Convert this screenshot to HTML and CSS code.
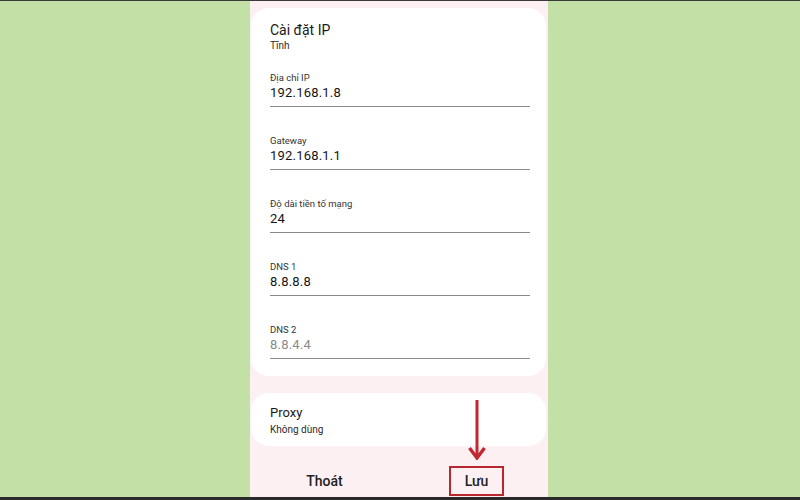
FILE: index.html
```html
<!DOCTYPE html>
<html lang="vi">
<head>
<meta charset="utf-8">
<link rel="stylesheet" href="styles.css">
</head>
<body>
<div class="frame">
  <div class="phone">
    <section class="card ip-card">
      <div class="title">Cài đặt IP</div>
      <div class="subtitle">Tĩnh</div>
      <div class="field first">
        <div class="label">Địa chỉ IP</div>
        <div class="value">192.168.1.8</div>
      </div>
      <div class="field">
        <div class="label">Gateway</div>
        <div class="value">192.168.1.1</div>
      </div>
      <div class="field">
        <div class="label">Độ dài tiền tố mạng</div>
        <div class="value">24</div>
      </div>
      <div class="field">
        <div class="label">DNS 1</div>
        <div class="value">8.8.8.8</div>
      </div>
      <div class="field">
        <div class="label">DNS 2</div>
        <div class="value hint">8.8.4.4</div>
      </div>
    </section>
    <section class="card proxy-card">
      <div class="title">Proxy</div>
      <div class="subtitle">Không dùng</div>
    </section>
    <div class="actions">
      <div class="action"><span class="btn">Thoát</span></div>
      <div class="action save">
        <span class="btn boxed">Lưu</span>
        <svg class="arrow" width="20" height="60" viewBox="0 0 20 60">
          <line x1="10" y1="0" x2="10" y2="57" stroke="#bf2a30" stroke-width="3"/>
          <polyline points="2.5,48 10,58 17.5,48" fill="none" stroke="#bf2a30" stroke-width="3.4" stroke-linejoin="miter"/>
        </svg>
      </div>
    </div>
  </div>
</div>
</body>
</html>
```
FILE: styles.css
```css
* { box-sizing: border-box; }
html, body { margin: 0; padding: 0; }
body {
  width: 800px;
  height: 500px;
  background: #c3e1a6;
  font-family: Roboto, "Noto Sans", "Liberation Sans", sans-serif;
  color: #1c1c1c;
  overflow: hidden;
}
.frame {
  height: 500px;
  border-top: 1px solid #3a3a3a;
  border-bottom: 3px solid #2a2a2a;
  display: flex;
  justify-content: center;
}
.phone {
  width: 298px;
  margin-left: -2px;
  background: #fcf0f2;
  padding: 7px 2px 0 1px;
  display: flex;
  flex-direction: column;
}
.card {
  background: #ffffff;
  border-radius: 18px;
  padding: 0 16px 0 19px;
}
.ip-card {
  padding-top: 13px;
  padding-bottom: 17px;
}
.title {
  font-size: 14px;
  line-height: 18px;
  color: #1a1a1a;
}
.subtitle {
  font-size: 10px;
  line-height: 13px;
  color: #2a2a2a;
}
.field {
  margin-top: 27px;
  border-bottom: 1px solid #8a8a8a;
  padding-bottom: 5px;
}
.field.first { margin-top: 19px; }
.label {
  font-size: 9.5px;
  line-height: 13px;
  color: #333;
}
.value {
  font-size: 13px;
  line-height: 17px;
  color: #151515;
  letter-spacing: 0.2px;
}
.value.hint { color: #8a8a8a; }
.proxy-card {
  margin-top: 17px;
  padding-top: 10.5px;
  padding-bottom: 10.5px;
}
.proxy-card .title { font-size: 13px; line-height: 17px; }
.proxy-card .subtitle { font-size: 10px; line-height: 13px; margin-top: 2px; }
.actions {
  flex: 1;
  display: flex;
  margin-left: -1px;
  margin-right: -2px;
}
.action {
  flex: 1 1 0;
  display: flex;
  justify-content: center;
  align-items: flex-end;
  padding-bottom: 1px;
  position: relative;
}
.btn {
  font-size: 14px;
  font-weight: 500;
  color: #222;
  line-height: 18px;
  padding: 4px 0 6px;
}
.boxed {
  border: 2px solid #b8272e;
  padding: 4px 14px;
  margin-left: 6px;
}
.arrow {
  position: absolute;
  left: 68px;
  top: -46px;
}
```
